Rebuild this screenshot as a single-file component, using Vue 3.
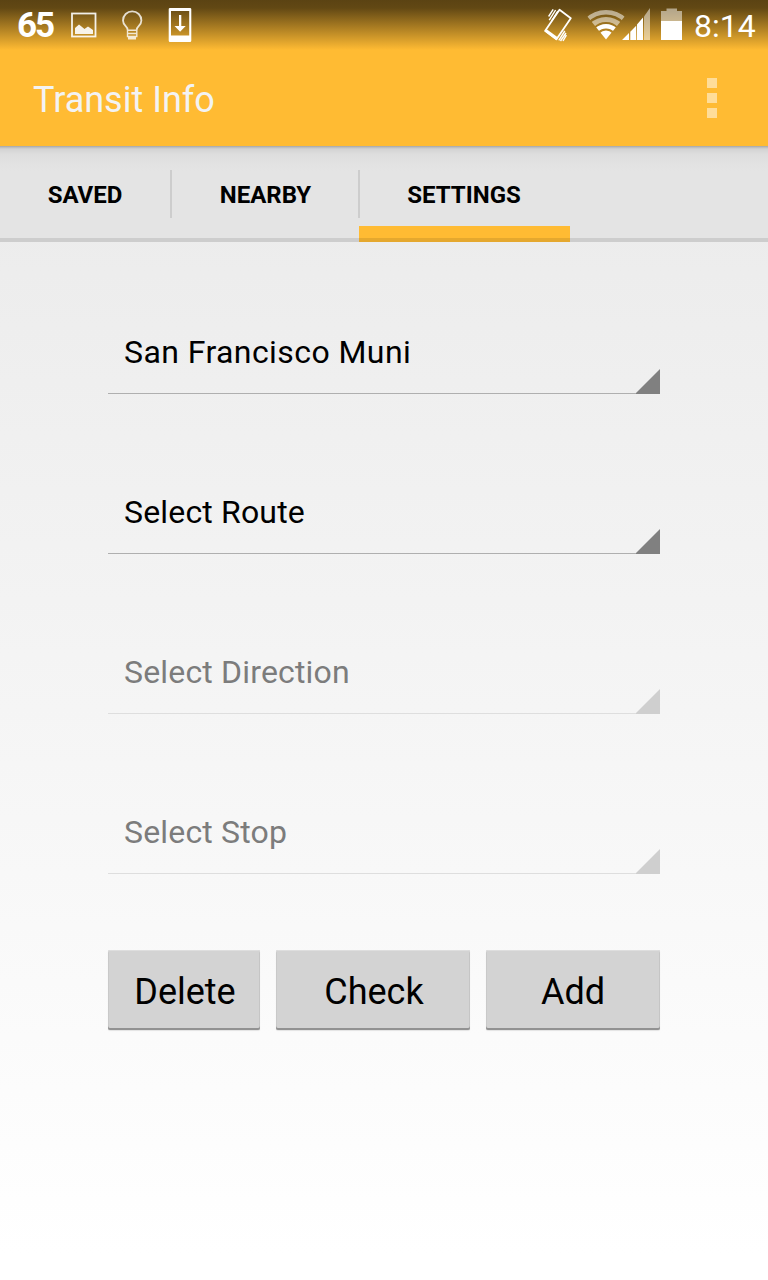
<script setup>
const tabs = [
  { label: 'SAVED', cls: 'saved' },
  { label: 'NEARBY', cls: 'nearby' },
  { label: 'SETTINGS', cls: 'settings' },
]
const fields = [
  { label: 'San Francisco Muni', cls: 'agency' },
  { label: 'Select Route', cls: 'route' },
  { label: 'Select Direction', cls: 'disabled' },
  { label: 'Select Stop', cls: 'disabled' },
]
const buttons = [
  { label: 'Delete', cls: 'delete' },
  { label: 'Check', cls: 'check' },
  { label: 'Add', cls: 'add' },
]
</script>

<template>
  <div class="screen">
    <header class="top">
      <div class="status">
        <span class="temp">65</span>
        <svg class="icons" width="140" height="50" viewBox="60 0 140 50">
          <g opacity=".9">
            <rect x="72" y="13.5" width="23.5" height="23" fill="none" stroke="#fff" stroke-width="1.8" />
            <path d="M75 34V28L79 24.5L84.500 29L88 26.500L93 30V34Z" fill="#fff" />
          </g>
          <g opacity=".8" fill="none" stroke="#fff" stroke-width="1.8">
            <path d="M127.500 29.500C127.500 26.500 123 25.500 123 20.500A9.200 9.200 0 0 1 141.400 20.500C141.400 25.500 136.800 26.500 136.800 29.500" />
            <path d="M127.500 29V36.500H136.800V29M127.500 30.300H136.800M127.500 33.500H136.800" stroke-width="1.4" />
            <path d="M128 37H136V39.500H128Z" fill="#fff" stroke="none" />
          </g>
          <path fill="#fff" fill-rule="evenodd" d="M170 8H190Q191.300 8 191.300 9.300V40.500Q191.300 42 190 42H170Q168.700 42 168.700 40.500V9.300Q168.700 8 170 8ZM171 11V35.500H189.200V11Z" />
          <path fill="#fff" d="M179 15H181.300V26H185.700L180.100 31.700L174.500 26H179Z" />
        </svg>
        <svg class="icons right" width="150" height="50" viewBox="540 0 150 50">
          <path d="M559.500 9.700L570.800 18.200L556.500 39.300L545.200 30.800Z" fill="none" stroke="#fff" stroke-width="1.8" stroke-linejoin="round" />
          <path d="M546.300 29L558 37.400L556.400 40.300L544.300 31.300Z" fill="#fff" />
          <path d="M548.600 16.500L553.200 9.300M549.200 20.200L555.600 10M551.600 21L557.800 11M558.800 40.300L564.800 31M560.500 41L566 33M563 41L566.400 35.200" stroke="#fff" stroke-width="1.4" fill="none" />
          <clipPath id="fan"><path d="M606 39.500L584.500 13V3H627.500V13Z" /></clipPath>
          <g clip-path="url(#fan)">
            <g opacity=".52" fill="none" stroke="#fff">
              <circle cx="606" cy="39.500" r="27.200" stroke-width="4.600" />
              <circle cx="606" cy="39.500" r="20" stroke-width="5" />
            </g>
            <circle cx="606" cy="39.500" r="13.300" fill="none" stroke="#fff" stroke-width="4.400" />
            <circle cx="606" cy="39.500" r="9" fill="#fff" />
          </g>
          <path fill="#fff" d="M622 40L629 33V40ZM630.300 31.700L636.200 25.800V40H630.300ZM637 24.500L643 17.500V40H637Z" />
          <path fill="#fff" opacity=".5" d="M644 16.500L650 8V40H644Z" />
          <path fill="#fff" opacity=".5" d="M666.500 8.500H677V11H682V21H661V11H666.500Z" />
          <path fill="#fff" d="M661 21H682V40H661Z" />
        </svg>
        <span class="clock">8:14</span>
      </div>
      <div class="bar">
        <h1>Transit Info</h1>
        <div class="more"><i /><i /><i /></div>
      </div>
    </header>
    <nav class="tabs">
      <div v-for="t in tabs" :key="t.label" class="tab" :class="t.cls"><span>{{ t.label }}</span></div>
    </nav>
    <main>
      <div v-for="f in fields" :key="f.label" class="field" :class="f.cls">
        <span>{{ f.label }}</span>
        <svg width="24" height="25" viewBox="0 0 24 25"><path d="M24 0V25H0V24Z" /></svg>
      </div>
      <div class="actions">
        <button v-for="b in buttons" :key="b.label" :class="b.cls">{{ b.label }}</button>
      </div>
    </main>
  </div>
</template>

<style>
body { margin: 0; }
</style>

<style scoped>
.screen {
  width: 768px;
  height: 1280px;
  overflow: hidden;
  box-sizing: border-box;
  font-family: Roboto, sans-serif;
  color: #000;
  background: linear-gradient(#e8e8e8, #fff 98%);
}
.top {
  height: 146px;
  background: linear-gradient(#5b4313 0, #624814 8px, #ffbb33 50px, #ffbb33 100%);
}
.status { display: flex; height: 50px; color: #fff; }
.temp { width: 43px; padding-left: 17px; font-size: 35px; font-weight: 700; line-height: 52px; letter-spacing: -2px; }
.icons { display: block; flex: none; }
.right { margin-left: 340px; }
.clock { margin-left: 4px; font-size: 32px; line-height: 52px; font-weight: 400; white-space: nowrap; }
.bar { display: flex; justify-content: space-between; height: 96px; padding: 0 51px 0 33px; }
h1 { margin: 0; font-size: 36px; font-weight: 400; line-height: 100px; color: #f3f3f3; }
.more { display: flex; flex-direction: column; gap: 5px; padding-top: 28px; }
.more i { width: 10px; height: 10px; background: #ffdd99; }
.tabs {
  display: flex;
  height: 96px;
  box-sizing: border-box;
  border-bottom: 4px solid #cdcdcd;
  background: linear-gradient(#a5a5a5 0, #b8b8b8 1px, #d3d3d3 3px, #dddddd 8px, #e2e2e2 17px, #e4e4e4 25px);
}
.tab {
  position: relative;
  box-sizing: border-box;
  height: 96px;
  text-align: center;
  font-size: 24px;
  font-weight: 700;
  line-height: 99px;
}
.saved { width: 170px; }
.nearby { width: 189px; padding-left: 2px; }
.settings {
  width: 211px;
  padding-right: 1px;
  background: linear-gradient(transparent 80px, #ffbb33 80px, #ffbb33 92px, #e5a82e 92px);
}
.nearby::before, .settings::before {
  content: '';
  position: absolute;
  left: 0;
  top: 24px;
  width: 2px;
  height: 48px;
  background: #cdcdcd;
}
.settings::before { left: -1px; }
main { padding: 62px 108px 0; }
.field {
  display: flex;
  justify-content: space-between;
  align-items: flex-end;
  box-sizing: border-box;
  height: 90px;
  margin-bottom: 70px;
  padding-left: 16px;
  border-bottom: 1px solid #afafaf;
  font-size: 32px;
}
.field span { line-height: 82px; letter-spacing: .17px; }
.agency span { letter-spacing: .42px; }
.field svg { display: block; margin-bottom: -1px; fill: #808080; }
.disabled { color: #7c7c7c; border-color: #dedede; }
.disabled svg { fill: #cfcfcf; }
.actions { display: flex; gap: 16px; margin-top: 76px; }
button {
  height: 80px;
  padding: 4px 0 0;
  border: 0;
  border-radius: 2px;
  background: #d3d3d3;
  box-shadow: inset 0 -2px #929292, inset 0 1px #dedede, inset -1px 0 #c5c5c5, inset 1px 0 #c9c9c9, 0 1px 1px #e3e3e3;
  font: 400 36px Roboto, sans-serif;
  color: #000;
}
.delete { width: 152px; padding-left: 2px; }
.check { width: 194px; padding-left: 2px; }
.add { width: 174px; }
</style>
